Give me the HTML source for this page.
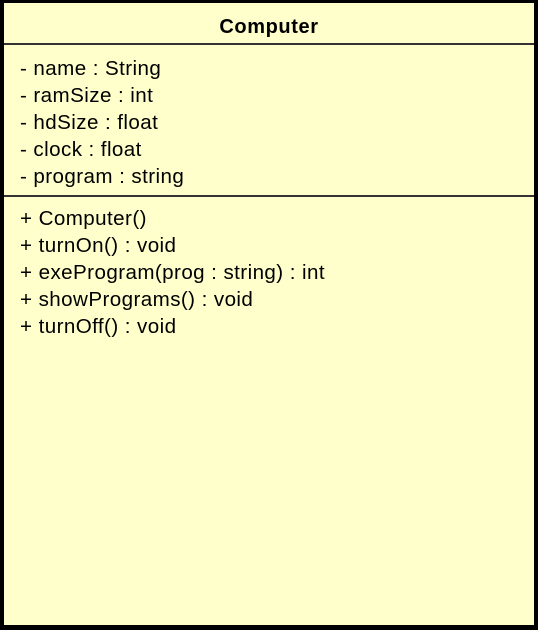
<!DOCTYPE html>
<html><head><style>
html,body{margin:0;padding:0;width:538px;height:630px;overflow:hidden;background:#fff}
.box{position:absolute;left:0;top:0;width:530px;height:622px;border-left:4px solid #000;border-top:3px solid #000;border-right:4px solid #000;border-bottom:5px solid #000;background:#ffffcc;font-family:"Liberation Sans",Arial,sans-serif;font-size:20px;letter-spacing:0.4px;color:#000}
.t{position:absolute;left:0;right:0;top:13px;text-align:center;font-weight:bold;font-size:20px;letter-spacing:0.6px}
.hr{position:absolute;left:0;right:0;height:2px;background:#333}
.l{position:absolute;left:16px;line-height:22px;white-space:nowrap;transform:scaleX(1.03);transform-origin:0 0}
</style></head><body>
<div style="position:absolute;left:253px;top:0;width:38px;height:2px;background:#000"></div>
<div class="box">
<div class="t">Computer</div>
<div class="hr" style="top:40px"></div>
<div class="l" style="top:55px">- name : String</div>
<div class="l" style="top:82px">- ramSize : int</div>
<div class="l" style="top:109px">- hdSize : float</div>
<div class="l" style="top:136px">- clock : float</div>
<div class="l" style="top:163px">- program : string</div>
<div class="hr" style="top:192px"></div>
<div class="l" style="top:205px">+ Computer()</div>
<div class="l" style="top:232px">+ turnOn() : void</div>
<div class="l" style="top:259px">+ exeProgram(prog : string) : int</div>
<div class="l" style="top:286px">+ showPrograms() : void</div>
<div class="l" style="top:313px">+ turnOff() : void</div>
</div>
</body></html>
